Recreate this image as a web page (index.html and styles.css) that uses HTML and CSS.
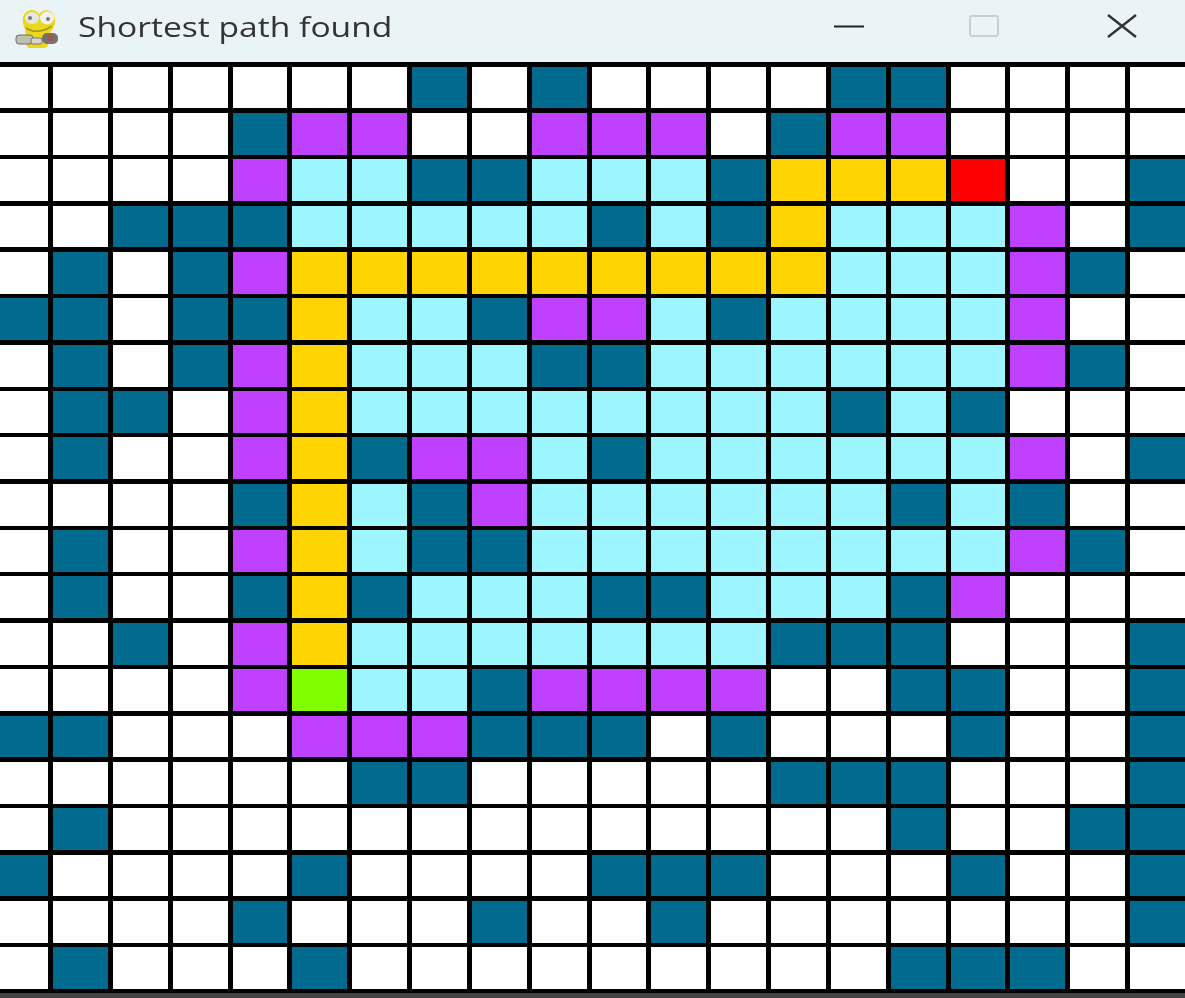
FILE: index.html
```html
<!DOCTYPE html>
<html lang="en">

<head>
  <meta charset="UTF-8">
  <title>Shortest path found</title>
  <link rel="stylesheet" href="styles.css">
</head>

<body>
  <div class="window">
    <div class="titlebar">
      <svg class="logo" viewBox="0 0 44 42">
        <path d="M10 22 C5 12 9 3 17 3 C20 3 22 5 24 7 C27 3 32 2 36 5 C42 10 41 19 36 24 L35 29 C33 38 33 40 30 41 L14 41 C11 40 11 36 11 31 Z" fill="#ecd71c"/>
        <ellipse cx="17" cy="11" rx="7" ry="6" fill="#e4e8e2"/>
        <ellipse cx="32" cy="11" rx="7" ry="6.5" fill="#f1f2ec"/>
        <circle cx="15" cy="11" r="2" fill="#7a7a6a"/>
        <circle cx="33" cy="12" r="2" fill="#7a7a6a"/>
        <path d="M11 21 C18 26 28 25 37 19" fill="none" stroke="#a8981a" stroke-width="1.6"/>
        <rect x="1" y="28" width="17" height="9" rx="3" fill="#bfc0b4" stroke="#6e6e64"/>
        <rect x="16" y="31" width="11" height="6" rx="2" fill="#d6d6cc" stroke="#77776c"/>
        <rect x="27" y="26" width="16" height="11" rx="5" fill="#77706c"/>
        <circle cx="35" cy="31" r="3" fill="#a8554e"/>
      </svg>
      <span class="title">Shortest path found</span>
      <div class="controls">
        <span class="ctrl"><svg viewBox="0 0 32 24" width="32" height="24"><path d="M1 12.5H31" stroke="#222" stroke-width="2"/></svg></span>
        <span class="ctrl"><svg viewBox="0 0 32 24" width="32" height="24"><rect x="2" y="2" width="28" height="20" rx="2" fill="none" stroke="#c9d0d2" stroke-width="2"/></svg></span>
        <span class="ctrl"><svg viewBox="0 0 32 24" width="32" height="24"><path d="M2 1L30 23M30 1L2 23" stroke="#333" stroke-width="2.4"/></svg></span>
      </div>
    </div>

    <div class="grid">
      <div class="w"></div><div class="w"></div><div class="w"></div><div class="w"></div><div class="w"></div><div class="w"></div><div class="w"></div><div class="b"></div><div class="w"></div><div class="b"></div><div class="w"></div><div class="w"></div><div class="w"></div><div class="w"></div><div class="b"></div><div class="b"></div><div class="w"></div><div class="w"></div><div class="w"></div><div class="w"></div>
      <div class="w"></div><div class="w"></div><div class="w"></div><div class="w"></div><div class="b"></div><div class="p"></div><div class="p"></div><div class="w"></div><div class="w"></div><div class="p"></div><div class="p"></div><div class="p"></div><div class="w"></div><div class="b"></div><div class="p"></div><div class="p"></div><div class="w"></div><div class="w"></div><div class="w"></div><div class="w"></div>
      <div class="w"></div><div class="w"></div><div class="w"></div><div class="w"></div><div class="p"></div><div class="c"></div><div class="c"></div><div class="b"></div><div class="b"></div><div class="c"></div><div class="c"></div><div class="c"></div><div class="b"></div><div class="y"></div><div class="y"></div><div class="y"></div><div class="r"></div><div class="w"></div><div class="w"></div><div class="b"></div>
      <div class="w"></div><div class="w"></div><div class="b"></div><div class="b"></div><div class="b"></div><div class="c"></div><div class="c"></div><div class="c"></div><div class="c"></div><div class="c"></div><div class="b"></div><div class="c"></div><div class="b"></div><div class="y"></div><div class="c"></div><div class="c"></div><div class="c"></div><div class="p"></div><div class="w"></div><div class="b"></div>
      <div class="w"></div><div class="b"></div><div class="w"></div><div class="b"></div><div class="p"></div><div class="y"></div><div class="y"></div><div class="y"></div><div class="y"></div><div class="y"></div><div class="y"></div><div class="y"></div><div class="y"></div><div class="y"></div><div class="c"></div><div class="c"></div><div class="c"></div><div class="p"></div><div class="b"></div><div class="w"></div>
      <div class="b"></div><div class="b"></div><div class="w"></div><div class="b"></div><div class="b"></div><div class="y"></div><div class="c"></div><div class="c"></div><div class="b"></div><div class="p"></div><div class="p"></div><div class="c"></div><div class="b"></div><div class="c"></div><div class="c"></div><div class="c"></div><div class="c"></div><div class="p"></div><div class="w"></div><div class="w"></div>
      <div class="w"></div><div class="b"></div><div class="w"></div><div class="b"></div><div class="p"></div><div class="y"></div><div class="c"></div><div class="c"></div><div class="c"></div><div class="b"></div><div class="b"></div><div class="c"></div><div class="c"></div><div class="c"></div><div class="c"></div><div class="c"></div><div class="c"></div><div class="p"></div><div class="b"></div><div class="w"></div>
      <div class="w"></div><div class="b"></div><div class="b"></div><div class="w"></div><div class="p"></div><div class="y"></div><div class="c"></div><div class="c"></div><div class="c"></div><div class="c"></div><div class="c"></div><div class="c"></div><div class="c"></div><div class="c"></div><div class="b"></div><div class="c"></div><div class="b"></div><div class="w"></div><div class="w"></div><div class="w"></div>
      <div class="w"></div><div class="b"></div><div class="w"></div><div class="w"></div><div class="p"></div><div class="y"></div><div class="b"></div><div class="p"></div><div class="p"></div><div class="c"></div><div class="b"></div><div class="c"></div><div class="c"></div><div class="c"></div><div class="c"></div><div class="c"></div><div class="c"></div><div class="p"></div><div class="w"></div><div class="b"></div>
      <div class="w"></div><div class="w"></div><div class="w"></div><div class="w"></div><div class="b"></div><div class="y"></div><div class="c"></div><div class="b"></div><div class="p"></div><div class="c"></div><div class="c"></div><div class="c"></div><div class="c"></div><div class="c"></div><div class="c"></div><div class="b"></div><div class="c"></div><div class="b"></div><div class="w"></div><div class="w"></div>
      <div class="w"></div><div class="b"></div><div class="w"></div><div class="w"></div><div class="p"></div><div class="y"></div><div class="c"></div><div class="b"></div><div class="b"></div><div class="c"></div><div class="c"></div><div class="c"></div><div class="c"></div><div class="c"></div><div class="c"></div><div class="c"></div><div class="c"></div><div class="p"></div><div class="b"></div><div class="w"></div>
      <div class="w"></div><div class="b"></div><div class="w"></div><div class="w"></div><div class="b"></div><div class="y"></div><div class="b"></div><div class="c"></div><div class="c"></div><div class="c"></div><div class="b"></div><div class="b"></div><div class="c"></div><div class="c"></div><div class="c"></div><div class="b"></div><div class="p"></div><div class="w"></div><div class="w"></div><div class="w"></div>
      <div class="w"></div><div class="w"></div><div class="b"></div><div class="w"></div><div class="p"></div><div class="y"></div><div class="c"></div><div class="c"></div><div class="c"></div><div class="c"></div><div class="c"></div><div class="c"></div><div class="c"></div><div class="b"></div><div class="b"></div><div class="b"></div><div class="w"></div><div class="w"></div><div class="w"></div><div class="b"></div>
      <div class="w"></div><div class="w"></div><div class="w"></div><div class="w"></div><div class="p"></div><div class="g"></div><div class="c"></div><div class="c"></div><div class="b"></div><div class="p"></div><div class="p"></div><div class="p"></div><div class="p"></div><div class="w"></div><div class="w"></div><div class="b"></div><div class="b"></div><div class="w"></div><div class="w"></div><div class="b"></div>
      <div class="b"></div><div class="b"></div><div class="w"></div><div class="w"></div><div class="w"></div><div class="p"></div><div class="p"></div><div class="p"></div><div class="b"></div><div class="b"></div><div class="b"></div><div class="w"></div><div class="b"></div><div class="w"></div><div class="w"></div><div class="w"></div><div class="b"></div><div class="w"></div><div class="w"></div><div class="b"></div>
      <div class="w"></div><div class="w"></div><div class="w"></div><div class="w"></div><div class="w"></div><div class="w"></div><div class="b"></div><div class="b"></div><div class="w"></div><div class="w"></div><div class="w"></div><div class="w"></div><div class="w"></div><div class="b"></div><div class="b"></div><div class="b"></div><div class="w"></div><div class="w"></div><div class="w"></div><div class="b"></div>
      <div class="w"></div><div class="b"></div><div class="w"></div><div class="w"></div><div class="w"></div><div class="w"></div><div class="w"></div><div class="w"></div><div class="w"></div><div class="w"></div><div class="w"></div><div class="w"></div><div class="w"></div><div class="w"></div><div class="w"></div><div class="b"></div><div class="w"></div><div class="w"></div><div class="b"></div><div class="b"></div>
      <div class="b"></div><div class="w"></div><div class="w"></div><div class="w"></div><div class="w"></div><div class="b"></div><div class="w"></div><div class="w"></div><div class="w"></div><div class="w"></div><div class="b"></div><div class="b"></div><div class="b"></div><div class="w"></div><div class="w"></div><div class="w"></div><div class="b"></div><div class="w"></div><div class="w"></div><div class="b"></div>
      <div class="w"></div><div class="w"></div><div class="w"></div><div class="w"></div><div class="b"></div><div class="w"></div><div class="w"></div><div class="w"></div><div class="b"></div><div class="w"></div><div class="w"></div><div class="b"></div><div class="w"></div><div class="w"></div><div class="w"></div><div class="w"></div><div class="w"></div><div class="w"></div><div class="w"></div><div class="b"></div>
      <div class="w"></div><div class="b"></div><div class="w"></div><div class="w"></div><div class="w"></div><div class="b"></div><div class="w"></div><div class="w"></div><div class="w"></div><div class="w"></div><div class="w"></div><div class="w"></div><div class="w"></div><div class="w"></div><div class="w"></div><div class="b"></div><div class="b"></div><div class="b"></div><div class="w"></div><div class="w"></div>
    </div>

    <div class="bottom"></div>
  </div>
</body>

</html>
```

FILE: styles.css
```css
html,
body {
  margin: 0;
  padding: 0;
  overflow: hidden;
  background-color: #000;
}

.window {
  width: 1185px;
  height: 998px;
  display: flex;
  flex-direction: column;
  filter: blur(0.6px);
}

.titlebar {
  height: 62px;
  display: flex;
  align-items: center;
  padding-left: 15px;
  background-color: #eaf4f7;
  flex-shrink: 0;
}

.logo {
  width: 44px;
  height: 42px;
  margin-bottom: 6px;
  flex-shrink: 0;
}

.title {
  margin-left: 19px;
  font-family: "Open Sans", sans-serif;
  font-size: 28px;
  color: #333;
  padding-bottom: 10px;
  transform: scaleX(1.2);
  transform-origin: left center;
}

.controls {
  margin-left: auto;
  padding-right: 47px;
  display: flex;
  padding-bottom: 11px;
}

.ctrl {
  display: flex;
  margin-left: 103px;
}

.ctrl:last-child {
  margin-left: 106px;
}

.grid {
  flex: 1;
  padding-top: 4.7px;
  display: grid;
  grid-template-columns: 48px repeat(19, 1fr);
  grid-template-rows: repeat(20, 1fr);
  gap: 4.6px 5px;
}

.w {
  background-color: #fff;
}

.b {
  background-color: #006a8f;
}

.p {
  background-color: #bf40ff;
}

.c {
  background-color: #9cf5ff;
}

.y {
  background-color: #ffd400;
}

.r {
  background-color: #ff0000;
}

.g {
  background-color: #7fff00;
}

.bottom {
  height: 9px;
  flex-shrink: 0;
  background: linear-gradient(#000 0 4px, #444 4px);
}
```
